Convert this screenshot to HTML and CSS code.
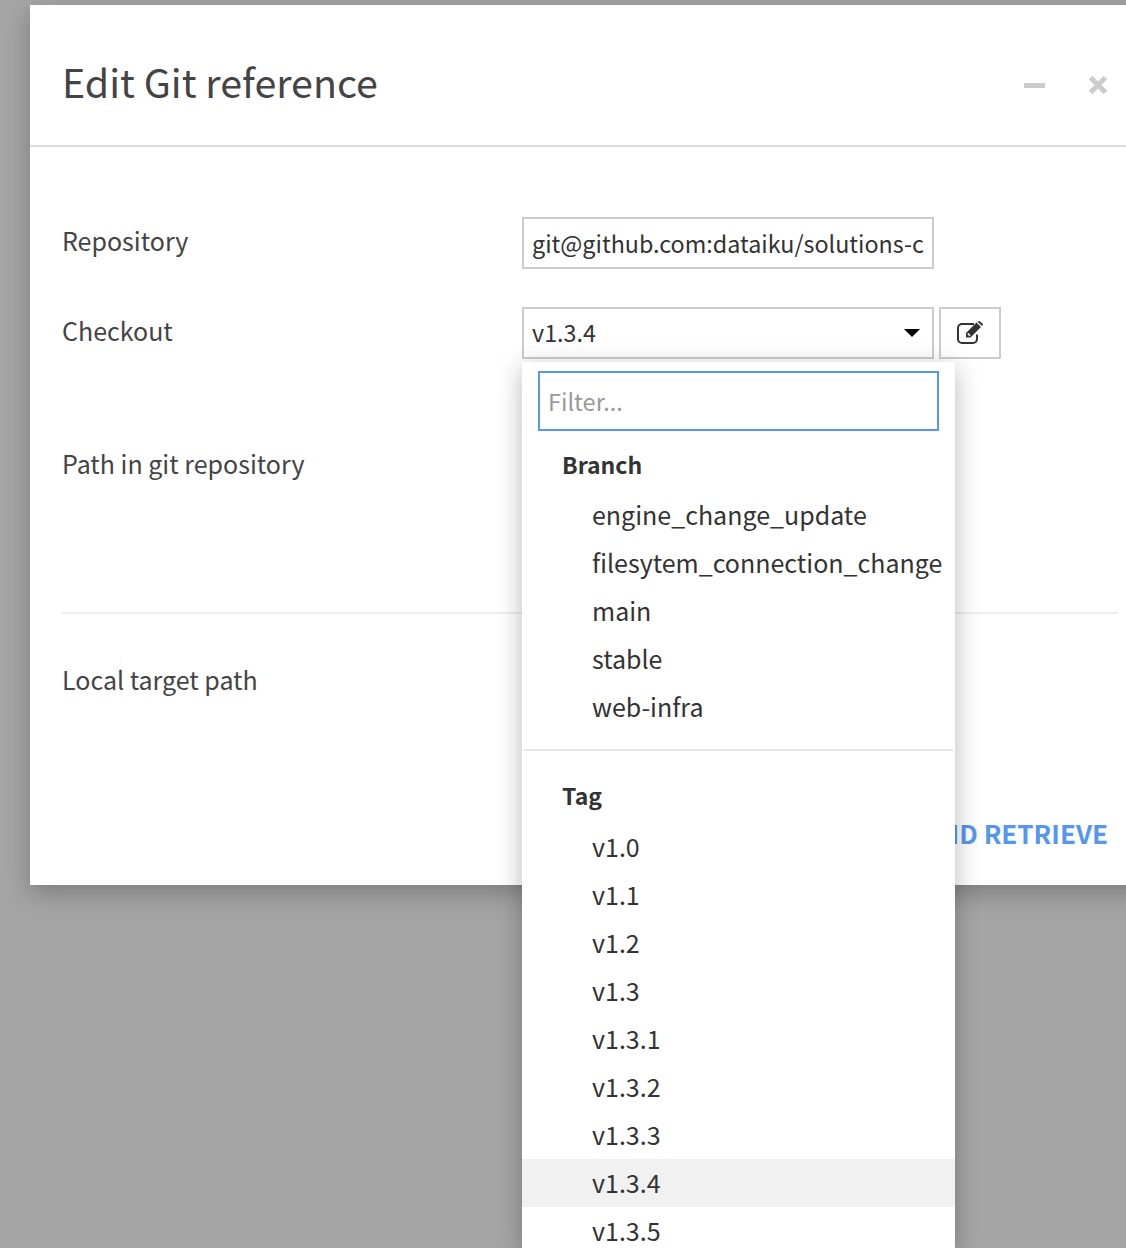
FILE: index.html
```html
<!DOCTYPE html>
<html>
  <head>
    <title>Edit Git reference</title>
    <link rel="stylesheet" href="styles.css">
  </head>
  <body>
    <div class="modal">
      <div class="modal-header">
        <h1>Edit Git reference</h1>
        <div class="modal-actions">
          <span class="minimize"></span>
          <svg class="close" width="20" height="20" viewBox="0 0 20 20"><path d="M2.5 2.5 17.5 17.5M17.5 2.5 2.5 17.5" stroke="#ccc" stroke-width="5" fill="none"/></svg>
        </div>
      </div>
      <div class="modal-body">
        <div class="row row-repo">
          <label>Repository</label>
          <div class="field">git@github.com:dataiku/solutions-c</div>
        </div>
        <div class="row row-checkout">
          <label>Checkout</label>
          <div class="field select">v1.3.4<span class="caret"></span></div>
          <div class="edit-btn">
            <svg width="28" height="24" viewBox="0 0 28 24">
              <path d="M20 13.5V18a4 4 0 0 1-4 4H5a4 4 0 0 1-4-4V7a4 4 0 0 1 4-4h12" fill="none" stroke="#333" stroke-width="2"/>
              <path d="M9 12 19.5 1.5 24 6 13.500 16.500H9Z" fill="#333"/>
              <path d="M21 0.500 22.500 0 26 3 25.500 4.500 25 5 20.500 0.800Z" fill="#333"/>
              <path d="M10.800 12.500 13 14.800" stroke="#fff" stroke-width="1.500"/>
            </svg>
          </div>
        </div>
        <div class="row row-path">
          <label>Path in git repository</label>
        </div>
        <hr class="divider">
        <div class="row row-target">
          <label>Local target path</label>
        </div>
      </div>
      <div class="modal-footer">
        <a class="save">SAVE AND RETRIEVE</a>
      </div>
    </div>

    <div class="dropdown">
      <div class="filter">Filter...</div>
      <div class="group-title group-branch">Branch</div>
      <ul>
        <li>engine_change_update</li>
        <li>filesytem_connection_change</li>
        <li>main</li>
        <li>stable</li>
        <li>web-infra</li>
      </ul>
      <div class="group-sep"></div>
      <div class="group-title">Tag</div>
      <ul>
        <li>v1.0</li>
        <li>v1.1</li>
        <li>v1.2</li>
        <li>v1.3</li>
        <li>v1.3.1</li>
        <li>v1.3.2</li>
        <li>v1.3.3</li>
        <li class="selected">v1.3.4</li>
        <li>v1.3.5</li>
      </ul>
    </div>
  </body>
</html>
```

FILE: styles.css
```css
* { box-sizing: border-box; margin: 0; padding: 0; }

html, body {
  height: 1248px;
  overflow: hidden;
}

body {
  position: relative;
  background: #a5a5a5;
  color: #333;
  font-family: "Noto Sans CJK JP", "Source Sans Pro", "Noto Sans", sans-serif;
  font-size: 25px;
  padding: 5px 0 0 30px;
}

.modal {
  width: 1140px;
  height: 880px;
  background: white;
  box-shadow: 0 8px 24px rgba(0, 0, 0, 0.25);
  position: relative;
}

.modal-header {
  height: 142px;
  border-bottom: 2px solid #ddd;
  display: flex;
  align-items: center;
  padding: 12px 0 0 32px;
}

.modal-header h1 {
  font-size: 39.4px;
  font-weight: 400;
  line-height: 56px;
  color: #444;
}

.modal-actions {
  position: absolute;
  top: 70px;
  left: 994px;
  display: flex;
  align-items: center;
  gap: 43px;
}

.minimize {
  width: 21px;
  height: 5px;
  background: #ccc;
}

.modal-body {
  padding: 70px 0 0 32px;
}

.row {
  display: flex;
  align-items: flex-start;
}

.row label {
  width: 460px;
  flex-shrink: 0;
  line-height: 40px;
  color: #444;
  font-size: 25px;
}

.row-repo { height: 90px; }
.row-checkout { height: 133px; }
.row-path { height: 172px; }
.row-target { margin-top: 45px; }

.row-repo label { margin-top: 3px; }
.row-checkout label { margin-top: 3px; }
.row-path label { margin-top: 3px; }

.field {
  width: 412px;
  height: 52px;
  border: 2px solid #ccc;
  padding: 0 8px;
  line-height: 48px;
  font-size: 23.3px;
  white-space: nowrap;
  overflow: hidden;
}

.select {
  position: relative;
  line-height: 46px;
}

.caret {
  position: absolute;
  right: 12px;
  top: 20px;
  border-left: 8px solid transparent;
  border-right: 8px solid transparent;
  border-top: 8px solid #000;
}

.edit-btn {
  width: 62px;
  height: 52px;
  margin-left: 5px;
  padding-left: 2px;
  border: 2px solid #ccc;
  display: flex;
  align-items: center;
  justify-content: center;
}

.divider {
  border: 0;
  border-top: 2px solid #eee;
  width: 1056px;
}

.modal-footer {
  position: absolute;
  top: 808px;
  right: 62px;
}

.save {
  color: #5596ef;
  font-weight: 700;
  font-size: 26px;
  line-height: 40px;
}

.dropdown {
  position: absolute;
  left: 522px;
  top: 362px;
  width: 433px;
  height: 886px;
  background: white;
  padding-top: 9px;
  box-shadow: 0 6px 24px rgba(0, 0, 0, 0.28);
}

.filter {
  margin-left: 16px;
  width: 401px;
  height: 60px;
  border: 2px solid #5596ef;
  padding-left: 8px;
  line-height: 56px;
  color: #999;
  font-size: 23.5px;
}

.group-title {
  margin: 10px 0 3px;
  padding-left: 40px;
  height: 48px;
  line-height: 46px;
  font-weight: 700;
  font-size: 23px;
}

.group-branch { margin-bottom: 2px; }

ul { list-style: none; }

li {
  height: 48px;
  line-height: 46px;
  padding-left: 70px;
  font-size: 25px;
  white-space: nowrap;
}

.selected { background: #f1f1f1; }

.group-sep {
  margin: 18px 2px 21px;
  height: 2px;
  background: #e5e5e5;
}
```
